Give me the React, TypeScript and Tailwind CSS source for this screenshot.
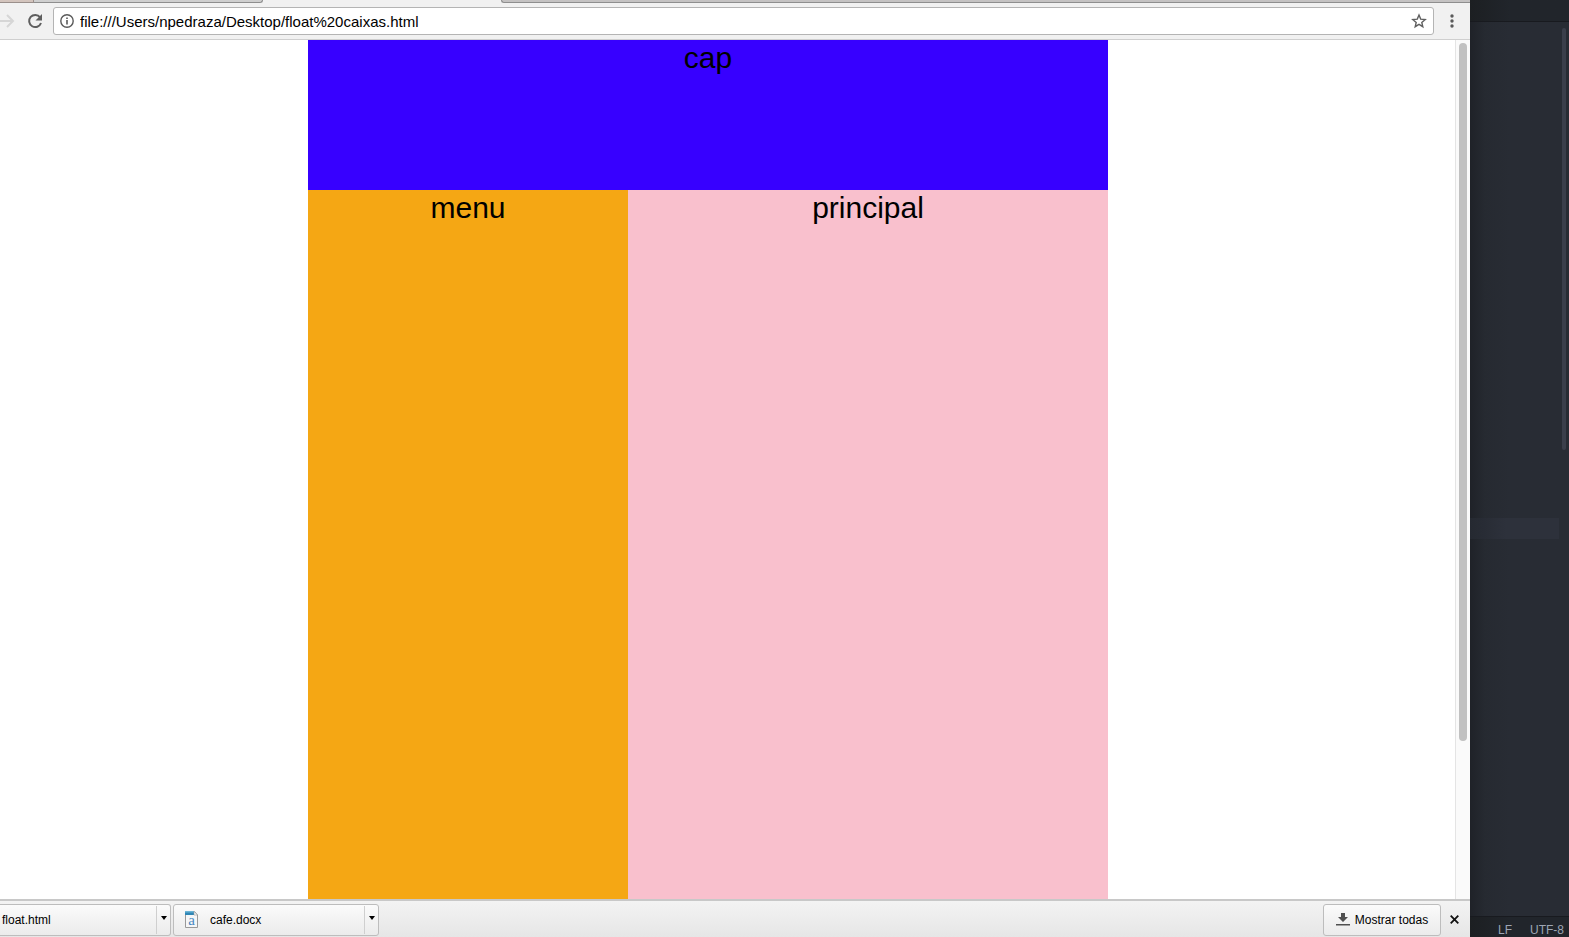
import React from "react";

function TabStrip() {
  return (
    <div className="flex h-[3px] shrink-0 bg-[#f1f1f1]">
      <div className="w-[34px] border-r border-b border-[#9a8f8b] bg-[#d3c4bd]" />
      <div className="w-[229px] rounded-br-sm border-r border-b border-[#8e8e8e] bg-[#cfcfcf]" />
      <div className="w-[238px]" />
      <div className="flex-1 rounded-bl-sm border-b border-l border-[#8e8e8e] bg-[#c4c2c2]" />
    </div>
  );
}

function Toolbar() {
  return (
    <div className="flex h-[37px] shrink-0 items-center border-b border-[#cfcfcf] bg-[#f1f1f1]">
      <button aria-label="Forward" className="w-[25px]">
        <svg width="16" height="16" viewBox="0 0 16 16" fill="none" stroke="#d6d6d6" strokeWidth="2">
          <path d="M0 8H13M7 2L13 8L7 14" />
        </svg>
      </button>
      <button aria-label="Reload" className="w-7">
        <svg width="20" height="18" viewBox="0 0 20 18">
          <path d="M15.1 5.3A6.1 6.1 0 1 0 16 11" fill="none" stroke="#5f5f5f" strokeWidth="2" />
          <path d="M17 2V8.5H10.5Z" fill="#5f5f5f" />
        </svg>
      </button>
      <div className="flex h-7 flex-1 items-center rounded-[3px] border border-[#b4b4b4] bg-white">
        <svg className="ml-[6px] shrink-0" width="14" height="14" viewBox="0 0 14 14">
          <circle cx="7" cy="7" r="6.2" fill="none" stroke="#5a5a5a" strokeWidth="1.4" />
          <path d="M6.2 6H7.8V10.5H6.2ZM6.2 3.4H7.8V5H6.2Z" fill="#5a5a5a" />
        </svg>
        <input
          aria-label="Address"
          className="ml-[6px] h-6 min-w-0 flex-1 bg-transparent text-[15px] text-black outline-none"
          defaultValue="file:///Users/npedraza/Desktop/float%20caixas.html"
        />
        <button aria-label="Bookmark" className="mr-[6px]">
          <svg width="16" height="16" viewBox="0 0 16 16" fill="none" stroke="#5f5f5f" strokeWidth="1.4">
            <path d="M8 2L9.7 6.1L14.2 6.5L10.8 9.4L11.8 13.7L8 11.4L4.2 13.7L5.2 9.4L1.8 6.5L6.3 6.1Z" />
          </svg>
        </button>
      </div>
      <button aria-label="Menu" className="flex w-9 justify-center">
        <svg width="4" height="14" viewBox="0 0 4 14" fill="#5a5a5a">
          <circle cx="2" cy="2" r="1.7" />
          <circle cx="2" cy="7" r="1.7" />
          <circle cx="2" cy="12" r="1.7" />
        </svg>
      </button>
    </div>
  );
}

function Page() {
  return (
    <div className="flex min-h-0 flex-1">
      <main className="flex min-w-0 flex-1 justify-center bg-white pr-[39px] text-center text-[30px] leading-9 text-black">
        <div className="flex w-[800px] flex-col">
          <header className="h-[150px] shrink-0 bg-[#3700ff]">cap</header>
          <div className="flex flex-1">
            <nav className="w-2/5 bg-[#f5a714]">menu</nav>
            <section className="w-3/5 bg-[#f9c0cd]">principal</section>
          </div>
        </div>
      </main>
      <div className="w-[15px] shrink-0 border-l border-[#e4e4e4] bg-[#fafafa] px-[3px] pt-[3px]">
        <div className="h-[81.5%] w-2 rounded-full bg-[#c1c1c1]" />
      </div>
    </div>
  );
}

function Caret() {
  return (
    <svg width="6" height="4" viewBox="0 0 6 4">
      <path d="M0 0H6L3 4Z" fill="#000" />
    </svg>
  );
}

function DocIcon() {
  return (
    <svg width="13" height="17" viewBox="0 0 13 17">
      <path d="M.5 .5H9.5L12.5 4V16.5H.5Z" fill="#f5f6f7" stroke="#999" />
      <path d="M0 .5H9V4H0Z" fill="#2f86b5" />
      <path d="M0 0H9V1.5H0Z" fill="#6bb4d6" />
      <path d="M9 .5V4H12.5Z" fill="#fff" stroke="#999" strokeWidth=".6" />
      <text x="6.5" y="14" textAnchor="middle" fontFamily="Liberation Serif, serif" fontSize="15" fill="#4886c0" className="text-[15px]">
        a
      </text>
    </svg>
  );
}

const shelfButton = "h-8 border-[#bdbdbd] bg-linear-to-b from-[#fbfbfb] to-[#ebebeb]";

function DownloadShelf() {
  return (
    <footer className="flex h-[38px] shrink-0 items-center border-t-2 border-[#c8c8c8] bg-linear-to-b from-[#f3f3f3] to-[#e6e6e6] pt-px text-[12px] text-black">
      <div className={`${shelfButton} flex w-[171px] rounded-r-[3px] border border-l-0`}>
        <button className="flex-1 pl-[2px] text-left">float.html</button>
        <button aria-label="float.html options" className="my-px flex w-[14px] items-center justify-center border-l border-[#cfcfcf] pb-1">
          <Caret />
        </button>
      </div>
      <div className={`${shelfButton} ml-[2px] flex w-[206px] rounded-[3px] border`}>
        <button className="flex flex-1 items-center gap-3 pl-[11px] text-left">
          <DocIcon />
          cafe.docx
        </button>
        <button aria-label="cafe.docx options" className="my-px flex w-[14px] items-center justify-center border-l border-[#cfcfcf] pb-1">
          <Caret />
        </button>
      </div>
      <button className={`${shelfButton} ml-auto flex w-[118px] items-center justify-center gap-[5px] rounded-[3px] border`}>
        <svg width="14" height="13" viewBox="0 0 14 13" fill="#505050">
          <path d="M5 0H9V4H12L7 9L2 4H5ZM0 11H14V12.6H0Z" />
        </svg>
        Mostrar todas
      </button>
      <button aria-label="Close" className="mr-[11px] ml-[9px]">
        <svg width="9" height="9" viewBox="0 0 9 9" stroke="#111" strokeWidth="1.8">
          <path d="M.7 .7L8.3 8.3M8.3 .7L.7 8.3" />
        </svg>
      </button>
    </footer>
  );
}

function Editor() {
  return (
    <aside className="flex w-[99px] shrink-0 flex-col bg-[#282c34]">
      <div className="h-[22px] shrink-0 border-b border-[#181a1f] bg-linear-to-r from-[#1c1f22] to-[#21252b] to-40%" />
      <div className="flex min-h-0 flex-1 bg-linear-to-r from-[#1f2228] via-[#262a31] via-15% to-[#282c34] to-40%">
        <div className="flex flex-1 flex-col">
          <div className="h-[55.5%]" />
          <div className="h-[21px] bg-linear-to-r from-[#252931] to-[#2d313b] to-40%" />
        </div>
        <div className="w-[10px] px-[3px] pt-[6px]">
          <div className="h-[47.5%] w-1 rounded-full bg-[#3b3f4b]" />
        </div>
      </div>
      <div className="flex h-[21px] shrink-0 justify-end gap-[18px] border-t border-[#181a1f] bg-linear-to-r from-[#1c1f22] to-[#21252b] to-40% pt-[7px] pr-[5px] text-[12px] leading-3 text-[#9da5b4]">
        <span>LF</span>
        <span>UTF-8</span>
      </div>
    </aside>
  );
}

export default function App() {
  return (
    <div className="flex h-screen overflow-hidden font-['Liberation_Sans',Arial,sans-serif]">
      <div className="flex min-w-0 flex-1 flex-col">
        <TabStrip />
        <Toolbar />
        <Page />
        <DownloadShelf />
      </div>
      <Editor />
    </div>
  );
}
